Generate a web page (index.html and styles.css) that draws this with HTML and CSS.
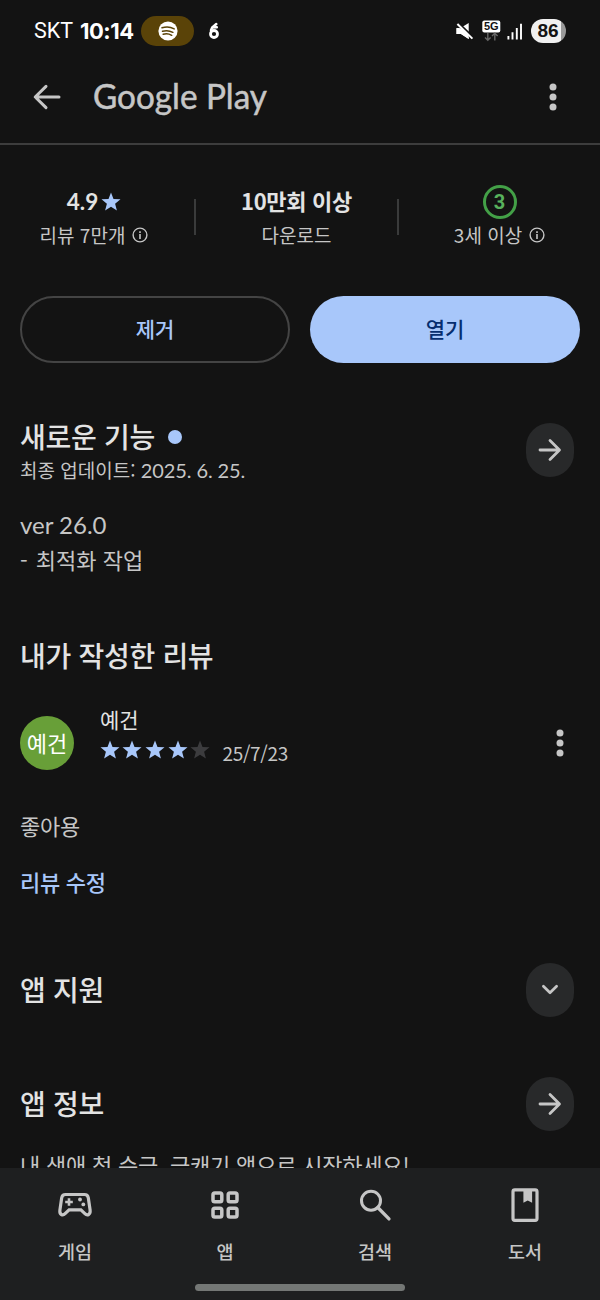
FILE: index.html
```html
<!DOCTYPE html>
<html lang="ko">
<head>
<meta charset="utf-8">
<title>Google Play</title>
<link rel="stylesheet" href="styles.css">
</head>
<body>
<svg class="defs" width="0" height="0" aria-hidden="true">
  <symbol id="star" viewBox="0 0 20 20"><path d="M10 .4l2.5 6.5 7 .4-5.4 4.4 1.8 6.9L10 14.8l-5.9 3.8 1.8-6.9L.5 7.3l7-.4z"/></symbol>
  <symbol id="info" viewBox="0 0 16 16"><circle cx="8" cy="8" r="6.9" fill="none" stroke="currentColor" stroke-width="1.4"/><path d="M7.2 7h1.6v5H7.2zM7.2 4.2h1.6v1.7H7.2z" fill="currentColor"/></symbol>
  <symbol id="dots" viewBox="0 0 8 28"><circle cx="4" cy="4" r="3.5"/><circle cx="4" cy="14" r="3.5"/><circle cx="4" cy="24" r="3.5"/></symbol>
  <symbol id="arrow" viewBox="0 0 24 24"><path d="M2 12h19M12 2.5l9.5 9.500-9.500 9.500" fill="none" stroke="currentColor" stroke-width="2.8" stroke-linecap="round" stroke-linejoin="round"/></symbol>
</svg>
<div class="screen">
  <header class="status">
    <span class="carrier">SKT</span><span class="clock">10:14</span>
    <span class="music-pill"><svg width="20" height="20" viewBox="0 0 20 20"><circle cx="10" cy="10" r="9.6" fill="#fff"/><path d="M4 6.8c4-1.2 8.6-.9 12.2 1.1M4.5 10.2c3.6-1 7.3-.6 10.4 1.1M5.2 13.3c2.9-.8 5.9-.5 8.5 1" fill="none" stroke="#5a4308" stroke-width="1.5" stroke-linecap="round"/></svg></span>
    <svg class="notice" width="12" height="18" viewBox="0 0 12 18"><circle cx="6" cy="12" r="3.5" fill="none" stroke="#fff" stroke-width="2.8"/><path d="M3 8.200L4.200 5.400 8.300 2M4.200 5.600l4.600-.3" fill="none" stroke="#fff" stroke-width="2.5" stroke-linecap="round"/></svg>
    <span class="spacer"></span>
    <svg class="mute" width="18" height="18" viewBox="0 0 18 18"><path d="M.5 6h4L12.7 1v16L5 12H.5z" fill="#fff"/><path d="M0 .2L17.5 17" stroke="#131313" stroke-width="4.2"/><path d="M.5 6.200h5.500l6.700 6.300V17L5 12H.5z" fill="#fff"/><path d="M1.4 2L16.4 16.6" stroke="#fff" stroke-width="2"/></svg>
    <svg class="net" width="19" height="22" viewBox="0 0 19 22"><rect x=".3" y=".4" width="18" height="12" rx="2" fill="#fff"/><text x="9.3" y="10.200" text-anchor="middle" class="net-label">5G</text><path d="M5.8 13v7M3 17.4l2.8 2.8 2.8-2.8M12.8 20.5v-7M10 16l2.8-2.8 2.8 2.8" fill="none" stroke="#666" stroke-width="1.4"/></svg>
    <svg class="signal" width="16" height="17" viewBox="0 0 16 17"><path d="M1.4 13v3.5M5.5 9.2v7.3M9.8 5v11.5M14 .8v15.7" stroke="#fff" stroke-width="1.9"/></svg>
    <span class="battery">86</span>
  </header>
  <div class="topbar">
    <svg class="back" width="28" height="26" viewBox="0 0 28 26"><path d="M26 13H2.5M13 2.4L2.2 13 13 23.6" fill="none" stroke="#c6c6c6" stroke-width="3" stroke-linecap="round" stroke-linejoin="round"/></svg>
    <svg class="brand" width="180" height="52"><text x="0" y="38" textLength="174" lengthAdjust="spacingAndGlyphs">Google Play</text></svg>
    <svg class="more" width="8" height="28"><use href="#dots"/></svg>
  </div>
  <main>
    <section class="stats">
      <div class="stat"><div class="value"><span class="score">4.9</span><svg class="blue" width="20" height="20"><use href="#star"/></svg></div><div class="label">리뷰 7만개<svg width="16" height="16"><use href="#info"/></svg></div></div>
      <i class="rule"></i>
      <div class="stat"><div class="value"><b class="count">10만회 이상</b></div><div class="label">다운로드</div></div>
      <i class="rule"></i>
      <div class="stat"><div class="value"><span class="age">3</span></div><div class="label">3세 이상<svg width="16" height="16"><use href="#info"/></svg></div></div>
    </section>
    <section class="actions"><button class="remove">제거</button><button class="open">열기</button></section>
    <section class="news">
      <div class="news-head"><div><h2>새로운 기능<i class="new-dot"></i></h2><p class="updated">최종 업데이트: <span>2025. 6. 25.</span></p></div><a class="round"><svg width="24" height="24"><use href="#arrow"/></svg></a></div>
      <p class="notes"><span class="ver">ver 26.0</span><br><span class="dash">-</span> 최적화 작업</p>
    </section>
    <section class="review">
      <h2>내가 작성한 리뷰</h2>
      <div class="reviewer">
        <span class="avatar">예건</span>
        <div class="who"><div class="name">예건</div><div class="rating"><svg width="20" height="20"><use href="#star"/></svg><svg width="20" height="20"><use href="#star"/></svg><svg width="20" height="20"><use href="#star"/></svg><svg width="20" height="20"><use href="#star"/></svg><svg class="off" width="20" height="20"><use href="#star"/></svg><span class="date">25/7/23</span></div></div>
        <svg class="more" width="8" height="28"><use href="#dots"/></svg>
      </div>
      <p class="comment">좋아용</p>
      <a class="edit">리뷰 수정</a>
    </section>
    <section class="row support"><h2>앱 지원</h2><a class="round"><svg width="18" height="12" viewBox="0 0 18 12"><path d="M2.4 2.2L9 8.8l6.6-6.6" fill="none" stroke="currentColor" stroke-width="2.7" stroke-linecap="round" stroke-linejoin="round"/></svg></a></section>
    <section class="row about"><h2>앱 정보</h2><a class="round"><svg width="24" height="24"><use href="#arrow"/></svg></a></section>
    <p class="desc">내 생애 첫 순금, 금캐기 앱으로 시작하세요!</p>
  </main>
  <nav>
    <div class="tabs">
      <a><svg width="36" height="36" viewBox="0 0 36 36"><path d="M8.5 7.5h19c2.2 0 3.4 1.2 3.8 3.2l1.8 12.4c.6 4.6-2.8 6-5.2 3.5l-4-3.8H12.1l-4 3.8c-2.4 2.500-5.800 1.100-5.200-3.500l1.800-12.400c.4-2 1.600-3.200 3.800-3.200z" fill="none" stroke="currentColor" stroke-width="3.200"/><path d="M12 11.200v7.600M8.200 15h7.600" stroke="currentColor" stroke-width="2.600"/><circle cx="23" cy="12.500" r="1.900" fill="currentColor"/><circle cx="26.300" cy="17.400" r="1.900" fill="currentColor"/></svg><span>게임</span></a>
      <a><svg width="36" height="36" viewBox="0 0 36 36"><g fill="none" stroke="currentColor" stroke-width="3.500"><rect x="6" y="6" width="8.800" height="8.800" rx="1.800"/><rect x="21.200" y="6" width="8.800" height="8.800" rx="1.800"/><rect x="6" y="21.200" width="8.800" height="8.800" rx="1.800"/><rect x="21.200" y="21.200" width="8.800" height="8.800" rx="1.800"/></g></svg><span>앱</span></a>
      <a><svg width="36" height="36" viewBox="0 0 36 36"><circle cx="14" cy="13.700" r="9.500" fill="none" stroke="currentColor" stroke-width="3"/><path d="M20.800 20.500l11.200 11.400" stroke="currentColor" stroke-width="3.300" stroke-linecap="round"/></svg><span>검색</span></a>
      <a><svg width="36" height="36" viewBox="0 0 36 36"><rect x="6" y="2.900" width="24" height="30.400" rx="1.800" fill="none" stroke="currentColor" stroke-width="3.200"/><path d="M16.400 2.500h8.700v13.200l-4.350-2.200-4.350 2.200z" fill="currentColor"/></svg><span>도서</span></a>
    </div>
    <i class="home"></i>
  </nav>
</div>
</body>
</html>
```
FILE: styles.css
```css
* { box-sizing: border-box; }
body { margin: 0; background: #131313; color: #c6c6c6; font-family: "Noto Sans CJK KR", sans-serif; }
h2, p { margin: 0; }
.defs { position: absolute; }
.screen { width: 600px; height: 1300px; overflow: hidden; display: flex; flex-direction: column; }
svg { display: block; flex: none; }
.status { height: 62px; padding: 0 34px; display: flex; align-items: center; color: #fff; flex: none; }
.carrier { font: 21.500px/30px Roboto, sans-serif; width: 46px; }
.clock { font: bold 22px/30px Inter, sans-serif; letter-spacing: -.5px; width: 61px; white-space: nowrap; }
.music-pill { width: 53px; height: 30px; border-radius: 15px; background: #5a4308; display: flex; align-items: center; justify-content: center; }
.notice { margin-left: 14px; }
.spacer { flex: 1; }
.net { margin-left: 8px; }
.net-label { font: bold 11px "Liberation Sans", sans-serif; fill: #131313; }
.signal { margin-left: 6px; }
.battery { margin-left: 8px; width: 35px; height: 24px; border-radius: 12px; background: linear-gradient(90deg, #f0f0f0 86%, #999 86%); color: #131313; font: bold 19px/24px "Liberation Sans", sans-serif; text-align: center; padding-right: 1px; }
.topbar { height: 83px; flex: none; display: flex; align-items: center; padding: 0 43px 12px 33px; border-bottom: 2px solid #3d3d3d; }
.brand { margin-left: 32px; margin-right: auto; overflow: visible; }
.brand text { font: 34px Lato, sans-serif; fill: #c6c6c6; stroke: #c6c6c6; stroke-width: .5px; }
.more { fill: #c6c6c6; }
main { flex: 1; min-height: 0; overflow: hidden; }
.stats { height: 151px; padding-top: 38px; display: grid; grid-template-columns: 194px 2px 201px 2px 201px; }
.stat { display: flex; flex-direction: column; align-items: center; }
.stat:first-child { padding-right: 6px; }
.value { height: 38px; display: flex; align-items: center; gap: 3px; font-size: 22px; color: #e3e3e3; }
.score { font: bold 22.500px/38px Lato, sans-serif; letter-spacing: .1px; }
.count { line-height: 32px; margin-top: -4px; letter-spacing: -.3px; }
.blue { fill: #a8c7fa; }
.label { height: 28px; display: flex; align-items: center; gap: 7px; font-size: 19px; line-height: 28px; white-space: nowrap; }
.rule { height: 36px; margin-top: 16px; background: #3a3b3b; }
.age { width: 34px; height: 34px; border: 3px solid #43a047; border-radius: 50%; color: #58b15c; font: bold 20px/28px Roboto, sans-serif; text-align: center; }
.actions { display: grid; grid-template-columns: 1fr 1fr; gap: 20px; padding: 0 20px; }
button { height: 67px; border-radius: 34px; font: 500 21px "Noto Sans CJK KR", sans-serif; padding: 0 0 3px; }
.remove { border: 2px solid #444; background: none; color: #a8c7fa; }
.open { border: 0; background: #a8c7fa; color: #062e6f; }
h2 { color: #e3e3e3; font-size: 28px; line-height: 38px; padding-bottom: 2px; font-weight: 500; letter-spacing: -.3px; display: flex; align-items: center; }
.news { padding: 54px 26px 0 20px; height: 273px; }
.news-head { display: flex; justify-content: space-between; }
.new-dot { width: 14px; height: 14px; border-radius: 50%; background: #a8c7fa; margin-left: 13px; margin-top: 1px; }
.updated { font-size: 19px; line-height: 26px; }
.updated span { font-family: Lato, sans-serif; font-size: 20px; letter-spacing: -.1px; }
.round { width: 48px; height: 54px; margin-top: 6px; border-radius: 24px; background: #28292a; display: flex; align-items: center; justify-content: center; }
.notes { margin-top: 24px; font-size: 22px; line-height: 34px; }
.dash { margin-right: 2px; }
.ver { font-family: Lato, sans-serif; font-size: 24px; }
.review { padding: 0 20px; height: 327px; }
.reviewer { display: flex; align-items: center; height: 54px; margin-top: 40px; }
.avatar { width: 54px; height: 54px; border-radius: 50%; background: #689f38; color: #fff; font-size: 22px; line-height: 52px; text-align: center; }
.who { margin: 0 auto 16px 26px; }
.name { font-size: 21px; line-height: 30px; color: #e3e3e3; }
.rating { display: flex; align-items: center; gap: 2.700px; fill: #a8c7fa; height: 32px; }
.rating svg { margin-left: -.5px; margin-right: .5px; }
.off { fill: #3c3c3e; }
.date { margin-left: 9px; font-size: 19px; margin-top: 4px; letter-spacing: -.3px; }
.reviewer .more { margin-right: 16px; }
.comment { margin-top: 40px; font-size: 22px; line-height: 30px; letter-spacing: -.2px; }
.edit { display: block; margin-top: 26px; font-size: 22px; line-height: 30px; font-weight: 500; letter-spacing: -.3px; color: #a8c7fa; }
.row { display: flex; justify-content: space-between; align-items: center; padding: 0 26px 0 20px; height: 54px; }
.row .round { margin: 0; }
.about { margin-top: 60px; }
.desc { padding-left: 20px; font-size: 22px; line-height: 34px; margin-top: 16px; letter-spacing: -.2px; white-space: nowrap; }
nav { flex: none; height: 132px; background: #1e1f20; display: flex; flex-direction: column; align-items: center; }
.tabs { width: 600px; height: 116px; display: grid; grid-template-columns: repeat(4, 150px); }
.tabs a { display: flex; flex-direction: column; align-items: center; padding-top: 19px; }
.tabs span { font-size: 18.500px; line-height: 28px; margin-top: 14px; font-weight: 500; }
.home { width: 210px; height: 7px; border-radius: 4px; background: #747775; }
```
